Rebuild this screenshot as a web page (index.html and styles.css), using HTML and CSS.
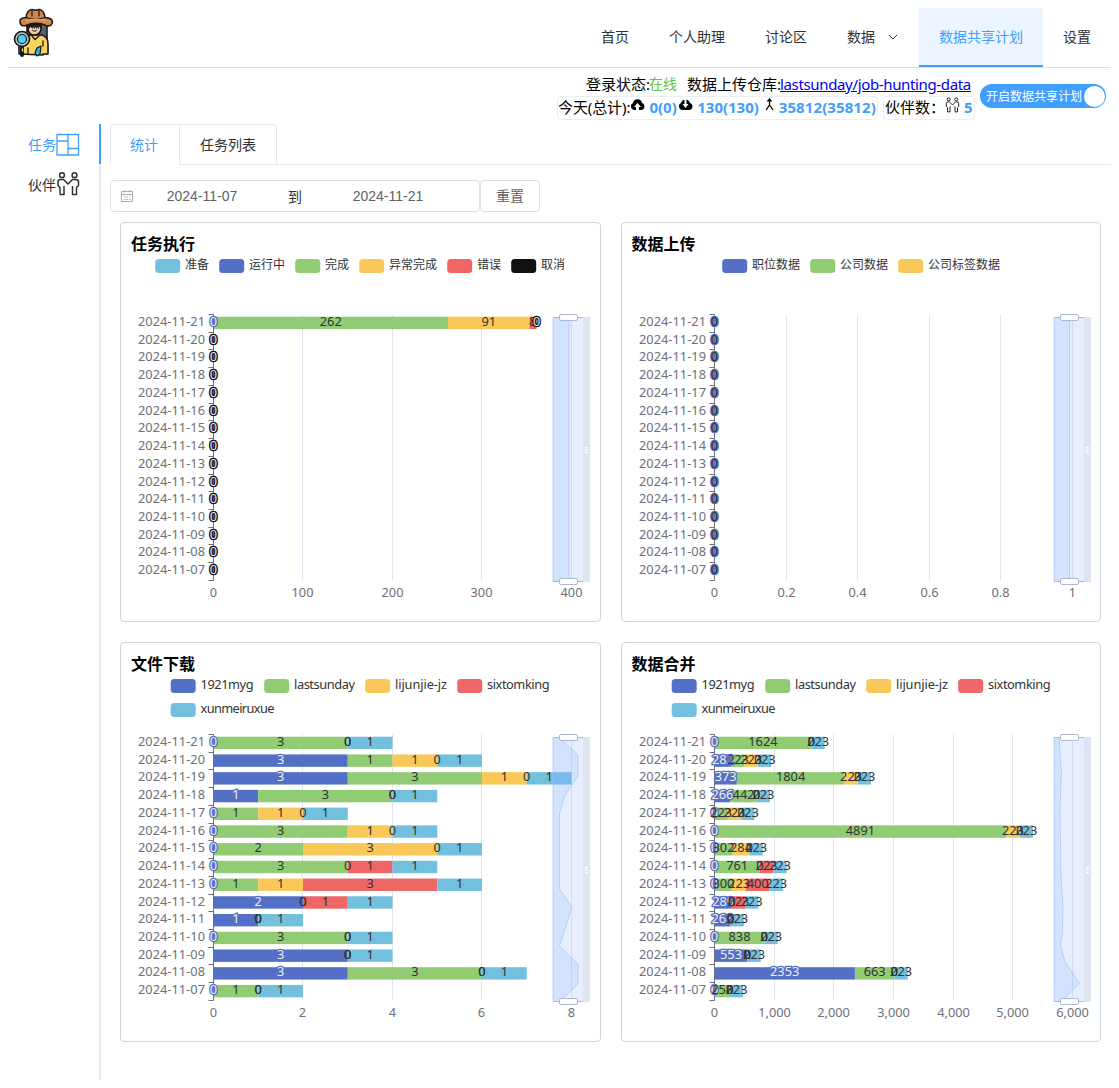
FILE: index.html
```html
<!DOCTYPE html>
<html lang="zh-CN">
<head>
<meta charset="utf-8">
<title>数据共享计划</title>
<link rel="stylesheet" href="styles.css">
</head>
<body>
<header class="header">
  <svg class="logo" width="42" height="52" viewBox="0 0 42 52" stroke="#17171c" stroke-width="1.600" stroke-linejoin="round" stroke-linecap="round">
    <path d="M14 17V33H34V16Z" fill="#596070"/>
    <path d="M6 46V31Q6 28 11 28L19 27H28Q35 28 35 36V46H30V47Z" fill="#f8d45c"/>
    <path d="M15 15V22Q17 27 21 27Q26 27 28 22V15Z" fill="#f6c9a0"/>
    <path d="M15.500 15H28V20L25.500 18V20.500L23.500 18V20.500L21.500 18V20.500L19.500 18V20.500L17.500 18.500L15.500 21Z" fill="#17171c" stroke-width=".5"/>
    <path d="M19.500 22.500Q21.500 24.500 23.500 22.500" fill="none" stroke-width="1"/>
    <path d="M7 13Q7 10 13 9.500Q14 2 19 1.500L22.500 2.200L26 1.500Q31 2 32 9.500Q39.500 10 39.500 14Q39 19 33 17.500Q23 13 13 17.500Q7 19 7 13Z" fill="#d18745"/>
    <path d="M13 9.500Q22 13 32 9.500M19 3V8M26 3V8" fill="none" stroke-width="1.200"/>
    <path d="M14 12.500Q22 10.500 32 12.500" fill="none" stroke="#efa562" stroke-width="1.400"/>
    <path d="M19 28L22 31.500L26 28M15 40V46M30 33V38" fill="none" stroke-width="1.300"/>
    <circle cx="9" cy="31" r="7.500" fill="#b7bec9"/>
    <circle cx="9" cy="31" r="4.500" fill="#4ed0ee" stroke-width="1.200"/>
    <path d="M9 40V47" stroke-width="4"/>
    <path d="M9.500 41V43" stroke="#f6c9a0" stroke-width="1.500"/>
    <path d="M22 45L24 40L28 38L27 46L24 48Z" fill="#30b8dc" stroke-width="1.200"/>
  </svg>
  <nav class="nav">
    <a class="nav-item">首页</a>
    <a class="nav-item">个人助理</a>
    <a class="nav-item">讨论区</a>
    <a class="nav-item nav-sub">数据<svg width="12" height="12" viewBox="0 0 12 12" fill="none" stroke="#303133"><path d="M2 4L6 8L10 4"/></svg></a>
    <a class="nav-item active">数据共享计划</a>
    <a class="nav-item">设置</a>
  </nav>
</header>

<section class="status">
  <div class="status-info">
    <div class="status-line">
      <span class="w-login">登录状态:</span><span class="online">在线</span>
      <span class="w-repo">数据上传仓库:</span><a class="repo" href="#">lastsunday/job-hunting-data</a>
    </div>
    <div class="status-line second">
      <div class="pill today">
        <span class="w-today">今天(总计):</span>
        <svg width="15" height="14" viewBox="0 0 15 14"><path d="M4 12A3.700 3.700 0 0 1 3 5A4.600 4.600 0 0 1 12 5A3.600 3.600 0 0 1 11 12H9V9H11L7.500 5L4 9H6V12Z"/></svg>
        <b class="n-up">0(0)</b>
        <svg width="15" height="14" viewBox="0 0 15 14"><path d="M4 12A3.700 3.700 0 0 1 3 5A4.600 4.600 0 0 1 6.500 1.500V6H4.500L7.500 10L10.500 6H8.500V1.500A4.600 4.600 0 0 1 12 5A3.600 3.600 0 0 1 11 12Z"/></svg>
        <b class="n-down">130(130)</b>
        <svg width="13" height="14" viewBox="0 0 13 14" fill="none" stroke="#000" stroke-width="1.300"><path d="M6.500 1V7L3 12M6.500 7L10 12M4.500 3.500L6.500 1L8.500 3.500"/></svg>
        <b class="n-merge">35812(35812)</b>
      </div>
      <div class="pill partner">
        <span class="w-partner">伙伴数：</span>
        <svg width="15" height="16" viewBox="0 0 24 24" fill="none" stroke="#222" stroke-width="1.600"><circle cx="6" cy="3" r="2.500"/><circle cx="18" cy="3" r="2.500"/><path d="M4 23V16L2 14V10Q2 7 5 7H7L12 12L17 7H19Q22 7 22 10V14L20 16V23H16V14M4 23H8V14"/></svg>
        <b>5</b>
      </div>
    </div>
  </div>
  <div class="switch"><span>开启数据共享计划</span><i></i></div>
</section>

<main class="main">
  <aside class="side">
    <div class="side-item active"><span>任务</span><svg width="24" height="24" viewBox="0 0 24 24" fill="none" stroke="currentColor" stroke-width="1.300"><path d="M1 1.500H22.500V22H1ZM12 1.500V22M1 8H12M12 15.500H22.500"/></svg></div>
    <div class="side-item"><span>伙伴</span><svg width="24" height="24" viewBox="0 0 24 24" fill="none" stroke="currentColor" stroke-width="1.500"><circle cx="6" cy="3.200" r="2.400"/><circle cx="18.500" cy="3.200" r="2.400"/><path d="M4 22.500V15.500L2 13.500V10Q2 7.500 4.500 7.500H7.500L12 12L16.500 7.500H19.500Q22.500 7.500 22.500 10V13.500L20.500 15.500V22.500H16.500V14M4 22.500H8V14"/></svg></div>
  </aside>
  <section class="content">
    <div class="tabs"><div class="tab active">统计</div><div class="tab">任务列表</div></div>
    <div class="filter">
      <div class="range">
        <svg width="14" height="14" viewBox="0 0 14 14" fill="none" stroke="#a8abb2"><path d="M1.500 2.500H12.500V12.500H1.500ZM1.500 5.500H12.500M4.500 1V3.500M9.500 1V3.500"/><path d="M4 8H10.500M4 10.500H10.500" stroke-dasharray="1.500 1"/></svg>
        <span class="date">2024-11-07</span><span class="to">到</span><span class="date">2024-11-21</span>
      </div>
      <button class="reset">重置</button>
    </div>
    <div class="cards">
      <article class="card"><h3>任务执行</h3><svg class="chart" id="tasks"></svg></article>
      <article class="card"><h3>数据上传</h3><svg class="chart" id="upload"></svg></article>
      <article class="card"><h3>文件下载</h3><svg class="chart" id="download"></svg></article>
      <article class="card"><h3>数据合并</h3><svg class="chart" id="merge"></svg></article>
    </div>
  </section>
</main>
<script src="charts.js"></script>
</body>
</html>
```
FILE: styles.css
```css
* { box-sizing: border-box; }
body {
  margin: 8px;
  background: #fff;
  color: #000;
  font-family: "Noto Sans", "Noto Sans CJK SC", sans-serif;
  font-size: 16px;
}
.header {
  display: flex;
  justify-content: space-between;
  height: 60px;
  border-bottom: 1px solid #dcdfe6;
}
.logo { margin-left: 5px; }
.nav { display: flex; font-size: 14px; color: #303133; }
.nav-item {
  height: 59px;
  padding: 0 20px;
  line-height: 57px;
  white-space: nowrap;
}
.nav-item.active { color: #409eff; background: #ecf5ff; border-bottom: 2px solid #409eff; }
.nav-sub { display: flex; align-items: center; gap: 12px; height: 57px; }
.status {
  display: flex;
  justify-content: flex-end;
  align-items: center;
  gap: 5px;
  height: 56px;
  padding-right: 5px;
}
.status-info { display: flex; flex-direction: column; align-items: flex-end; }
.status-line { display: flex; align-items: center; height: 23px; line-height: 22px; white-space: nowrap; padding-right: 5px; }
.status-line.second { height: 24px; gap: 5px; padding-right: 0; }
.w-login { width: 63px; font-size: 15px; }
.online { width: 38px; font-size: 14px; color: #67c23a; }
.w-repo { width: 93px; font-size: 15px; }
.repo { width: 190px; color: #0000ee; font-size: 15px; letter-spacing: -0.35px; }
.pill {
  display: flex;
  align-items: center;
  height: 24px;
  padding-bottom: 2px;
  border: 1px solid #ebeef5;
  border-radius: 4px;
}
.pill b { color: #409eff; font-size: 15px; }
.pill svg { flex: none; margin-top: -4px; }
.today { width: 321px; }
.partner { width: 92px; }
.w-today { width: 73px; font-size: 15px; letter-spacing: -0.1px; }
.n-up { width: 32px; margin: 0 -3px 0 4px; }
.n-down { width: 66px; margin-left: 4px; }
.n-merge { width: 99px; margin-left: 3px; letter-spacing: 0.1px; }
.w-partner { width: 61px; font-size: 15px; padding-left: 1px; overflow: hidden; }
.partner b { margin-left: 4px; }
.switch {
  display: flex;
  align-items: center;
  justify-content: space-between;
  width: 126px;
  height: 24px;
  padding: 0 1px 0 6px;
  border-radius: 12px;
  background: #409eff;
  color: #fff;
  font-size: 12px;
  white-space: nowrap;
}
.switch i { width: 21px; height: 21px; flex: none; border-radius: 50%; background: #fff; }
.main { display: flex; height: 956px; }
.side { width: 93px; border-right: 2px solid #e4e7ed; font-size: 14px; color: #303133; }
.side-item {
  display: flex;
  align-items: center;
  height: 40px;
  width: 93px;
  padding-left: 20px;
}
.side-item.active { color: #409eff; border-right: 2px solid #409eff; }
.side-item.active svg { margin-top: 1px; }
.side-item span { padding-bottom: 1px; }
.content { flex: 1; padding-left: 9px; }
.tabs { display: flex; height: 41px; border-bottom: 1px solid #e4e7ed; font-size: 14px; color: #303133; }
.tab {
  height: 41px;
  padding: 0 20px;
  line-height: 39px;
  border: 1px solid #e4e7ed;
  border-left: 0;
  border-radius: 0 4px 0 0;
}
.tab.active { color: #409eff; padding-left: 19px; padding-right: 21px; border-left: 1px solid #e4e7ed; border-bottom-color: #fff; border-radius: 4px 0 0 0; }
.filter { display: flex; margin-top: 15px; height: 32px; font-size: 14px; color: #606266; }
.range {
  display: flex;
  align-items: center;
  width: 370px;
  padding: 0 9px;
  border: 1px solid #dcdfe6;
  border-radius: 4px;
}
.range svg { flex: none; }
.date { width: 136px; text-align: center; font-family: "Liberation Sans", sans-serif; }
.to { width: 50px; text-align: center; color: #303133; padding-bottom: 1px; }
.reset {
  width: 60px;
  padding: 0 0 2px;
  border: 1px solid #dcdfe6;
  border-radius: 4px;
  background: #fff;
  color: #606266;
  font: inherit;
}
.cards { display: grid; grid-template-columns: 1fr 1fr; grid-auto-rows: 400px; gap: 20px; padding: 10px 10px 0; }
.card { display: grid; border: 1px solid #cfd3dc; border-radius: 4px; }
.card > * { grid-area: 1 / 1; }
.card h3 { margin: 9px 10px; font-size: 16px; line-height: 24px; height: 24px; }
.chart { width: 479px; height: 398px; margin: -1px; overflow: visible; font-size: 12.8px; }
.legend-label { fill: #333; }
.legend-cjk { font-size: 12px; }
.axis-label { fill: #6e7079; }
.axis { stroke: #6e7079; fill: none; }
.grid-line { stroke: #e0e6f1; }
.value { fill: #333; text-anchor: middle; }
.value.on-dark { fill: #eee; stroke-width: 2.6px; paint-order: stroke; }
.zoom-area { fill: rgb(135, 175, 255); fill-opacity: .2; }
.zoom-shadow { fill: rgb(135, 175, 255); fill-opacity: .2; stroke: #9dbcf0; stroke-opacity: .6; }
.zoom-strip { fill: #d2dbee; fill-opacity: .75; }
.zoom-edge { stroke: #acb8d1; }
.zoom-handle { fill: #fff; stroke: #acb8d1; }
.zoom-grip { fill: #fff; }
```
FILE: charts.js
```js
const BLUE = '#5470c6', GREEN = '#91cc75', YELLOW = '#fac858', RED = '#ee6666', CYAN = '#73c0de', BLACK = '#111111';
const LEFT = 93.5, TOP = 92.5, ROW = 17.73, WIDTH = 358, BOTTOM = TOP + ROW * 15;
const days = Array.from({ length: 15 }, (_, i) => '2024-11-' + String(21 - i).padStart(2, '0'));

function add(svg, tag, attrs, text) {
  const el = document.createElementNS('http://www.w3.org/2000/svg', tag);
  for (const k in attrs) el.setAttribute(k, attrs[k]);
  if (text !== undefined) el.textContent = text;
  svg.appendChild(el);
}

function drawChart(id, { legend, max, ticks, colors, rows, shadow }) {
  const svg = document.getElementById(id);
  for (const [label, color, x, y, w] of legend) {
    add(svg, 'rect', { x: x - 0.3, y, width: 25, height: 14, rx: 3.5, fill: color });
    const cjk = label.charCodeAt(0) > 255;
    add(svg, 'text', { class: 'legend-label' + (cjk ? ' legend-cjk' : ''), x: x + 29.5, y: y + 10, textLength: w }, label);
  }
  for (const [value, label] of ticks) {
    const x = Math.round(LEFT + value / max * WIDTH - 0.6) + 0.5;
    if (value) add(svg, 'line', { class: 'grid-line', x1: x, x2: x, y1: TOP, y2: BOTTOM });
    add(svg, 'text', { class: 'axis-label', x, y: 375, 'text-anchor': 'middle' }, label);
  }
  rows.forEach((row, i) => {
    let x = LEFT;
    row.forEach((v, s) => {
      const w = v / max * WIDTH;
      if (v) add(svg, 'rect', { x, y: TOP + ROW * i + 2.2, width: w, height: 12.4, fill: colors[s] });
      x += w;
    });
  });
  let path = `M${LEFT} ${TOP}V${BOTTOM}`;
  for (let i = 0; i <= 15; i++) path += `M${LEFT - 5} ${Math.round(TOP + ROW * i - 0.5) + 0.5}H${LEFT}`;
  add(svg, 'path', { class: 'axis', d: path });
  rows.forEach((row, i) => {
    const y = TOP + ROW * i + 11.5;
    add(svg, 'text', { class: 'axis-label', x: 18, y, textLength: 67 }, days[i]);
    let x = LEFT;
    row.forEach((v, s) => {
      const w = v / max * WIDTH;
      const dark = colors[s] === BLUE || colors[s] === BLACK;
      add(svg, 'text', { class: 'value' + (dark ? ' on-dark' : ''), stroke: dark ? colors[s] : 'none', x: x + w / 2, y }, v);
      x += w;
    });
  });
  add(svg, 'rect', { class: 'zoom-area', x: 433, y: 95.5, width: 30, height: 264 });
  add(svg, 'path', { class: 'zoom-shadow', d: `M433 95.5L${shadow}L433 359.5Z` });
  add(svg, 'rect', { class: 'zoom-strip', x: 463, y: 95, width: 7, height: 265 });
  for (const y of [95.5, 359.5]) {
    add(svg, 'line', { class: 'zoom-edge', x1: 433, x2: 463, y1: y, y2: y });
    add(svg, 'rect', { class: 'zoom-handle', x: 439.5, y: y - 3, width: 18, height: 6, rx: 1.5 });
  }
  for (const y of [225, 227.5, 230]) add(svg, 'rect', { class: 'zoom-grip', x: 465, y, width: 3, height: 1.3 });
}

const zeros = (n, count) => Array.from({ length: count }, () => Array(n).fill(0));

drawChart('tasks', {
  legend: [['准备', CYAN, 35.5, 37, 24], ['运行中', BLUE, 99.5, 37, 36], ['完成', GREEN, 175.5, 37, 24], ['异常完成', YELLOW, 239.5, 37, 48], ['错误', RED, 327.5, 37, 24], ['取消', BLACK, 391.5, 37, 24]],
  max: 400,
  ticks: [[0, '0'], [100, '100'], [200, '200'], [300, '300'], [400, '400']],
  colors: [CYAN, BLUE, GREEN, YELLOW, RED, BLACK],
  rows: [[0, 0, 262, 91, 8, 0], ...zeros(6, 14)],
  shadow: '449 95.5L449 359.5'
});

drawChart('upload', {
  legend: [['职位数据', BLUE, 101.5, 37, 48], ['公司数据', GREEN, 189.5, 37, 48], ['公司标签数据', YELLOW, 277.5, 37, 72]],
  max: 1,
  ticks: [[0, '0'], [0.2, '0.2'], [0.4, '0.4'], [0.6, '0.6'], [0.8, '0.8'], [1, '1']],
  colors: [BLUE, GREEN, YELLOW],
  rows: zeros(3, 15),
  shadow: '448.5 95.5L448.5 359.5'
});

const users = [['1921myg', BLUE, 51, 37, 53], ['lastsunday', GREEN, 144.5, 37, 61], ['lijunjie-jz', YELLOW, 245.5, 37, 52], ['sixtomking', RED, 337.5, 37, 62.5], ['xunmeiruxue', CYAN, 51, 61, 74]];
const userColors = [BLUE, GREEN, YELLOW, RED, CYAN];

drawChart('download', {
  legend: users,
  max: 8,
  ticks: [[0, '0'], [2, '2'], [4, '4'], [6, '6'], [8, '8']],
  colors: userColors,
  rows: [[0, 3, 0, 0, 1], [3, 1, 1, 0, 1], [3, 3, 1, 0, 1], [1, 3, 0, 0, 1], [0, 1, 1, 0, 1], [0, 3, 1, 0, 1], [0, 2, 3, 0, 1], [0, 3, 0, 1, 1], [0, 1, 1, 3, 1], [2, 0, 0, 1, 1], [1, 0, 0, 0, 1], [0, 3, 0, 0, 1], [3, 0, 0, 0, 1], [3, 3, 0, 0, 1], [0, 1, 0, 0, 1]],
  shadow: '439 95.5L458 113V134L445 153L439.5 171V247L452 265L439.5 304L458 322V342L440 359.5'
});

drawChart('merge', {
  legend: users,
  max: 6000,
  ticks: [[0, '0'], [1000, '1,000'], [2000, '2,000'], [3000, '3,000'], [4000, '4,000'], [5000, '5,000'], [6000, '6,000']],
  colors: userColors,
  rows: [[0, 1624, 0, 0, 223], [282, 223, 223, 0, 223], [373, 1804, 223, 0, 223], [266, 442, 0, 0, 223], [0, 223, 223, 0, 223], [0, 4891, 223, 0, 223], [0, 302, 284, 0, 223], [0, 761, 0, 223, 223], [0, 300, 223, 400, 223], [289, 0, 0, 223, 223], [268, 0, 0, 0, 223], [0, 838, 0, 0, 223], [553, 0, 0, 0, 223], [2353, 663, 0, 0, 223], [0, 258, 0, 0, 223]],
  shadow: '438 95.5L440.5 130L439 165L440 235L442 265L441.5 290L439.5 303L444 320L458.500 341L440 359.5'
});
```
